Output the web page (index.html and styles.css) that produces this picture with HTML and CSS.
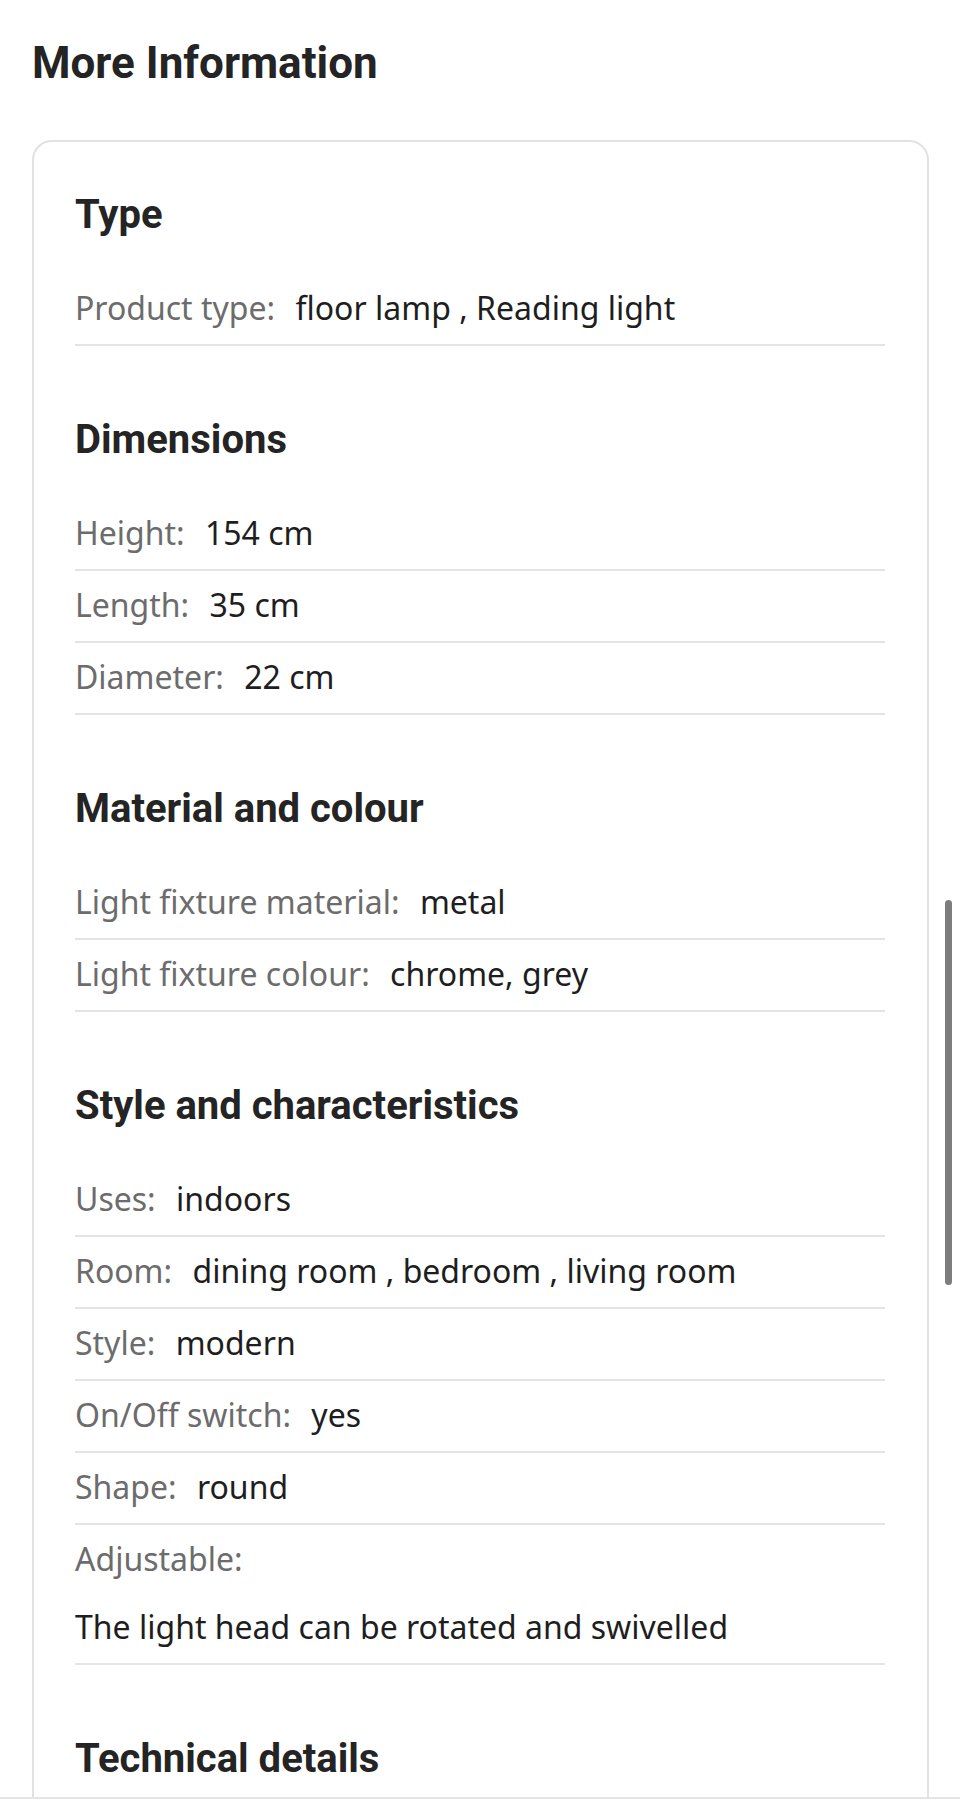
FILE: index.html
```html
<!DOCTYPE html>
<html lang="en">
<head>
  <meta charset="UTF-8" />
  <meta name="viewport" content="width=device-width, initial-scale=1.0"/>
  <title>More Information</title>
  <link rel="stylesheet" href="styles.css">
</head>
<body>

  <h1 class="title">More Information</h1>

  <div class="card">

    <h2>Type</h2>
    <div class="row"><span class="label">Product type:</span> <span class="value">floor lamp , Reading light</span></div>

    <h2>Dimensions</h2>
    <div class="row"><span class="label">Height:</span> <span class="value">154 cm</span></div>
    <div class="row"><span class="label">Length:</span> <span class="value">35 cm</span></div>
    <div class="row"><span class="label">Diameter:</span> <span class="value">22 cm</span></div>

    <h2>Material and colour</h2>
    <div class="row"><span class="label">Light fixture material:</span> <span class="value">metal</span></div>
    <div class="row"><span class="label">Light fixture colour:</span> <span class="value">chrome, grey</span></div>

    <h2>Style and characteristics</h2>
    <div class="row"><span class="label">Uses:</span> <span class="value">indoors</span></div>
    <div class="row"><span class="label">Room:</span> <span class="value">dining room , bedroom , living room</span></div>
    <div class="row"><span class="label">Style:</span> <span class="value">modern</span></div>
    <div class="row"><span class="label">On/Off switch:</span> <span class="value">yes</span></div>
    <div class="row"><span class="label">Shape:</span> <span class="value">round</span></div>
    <div class="row long">
      <span class="label">Adjustable:</span>
      <div class="value">The light head can be rotated and swivelled</div>
    </div>

    <h2>Technical details</h2>

  </div>

  <div class="scroll-thumb"></div>
  <div class="bottom-bar"></div>

</body>
</html>
```

FILE: styles.css
```css
body {
  font-family: "Noto Sans", Roboto, Arial, sans-serif;
  margin: 0;
  padding: 0 31px 0 32px;
  background-color: #fff;
  color: #222;
}
.title {
  margin: 38px 0 52px;
  font-family: Roboto, "Noto Sans", Arial, sans-serif;
  font-size: 44px;
  line-height: 50px;
  font-weight: 700;
  color: #242424;
}
.card {
  border: 2px solid #e2e2e2;
  border-radius: 20px;
  padding: 51px 42px 28px 41px;
}
.card h2 {
  margin: 72px 0 37px;
  font-family: Roboto, "Noto Sans", Arial, sans-serif;
  font-size: 40px;
  line-height: 44px;
  font-weight: 700;
  color: #242424;
}
.card h2:first-child {
  margin-top: 0;
}
.row {
  padding: 14px 0 16px;
  font-size: 32px;
  line-height: 40px;
  border-bottom: 2px solid #e4e4e4;
}
.label {
  color: #6c6c6c;
}
.value {
  margin-left: 12px;
  color: #1e1e1e;
}
.row.long .value {
  display: block;
  margin: 28px 0 0;
}
.scroll-thumb {
  position: fixed;
  left: 945px;
  top: 900px;
  width: 7px;
  height: 385px;
  border-radius: 4px;
  background: #7d7d7d;
}
.bottom-bar {
  position: fixed;
  left: 0;
  right: 0;
  bottom: 0;
  height: 10px;
  background: #fff;
  border-top: 2px solid #e4e4e4;
}
```
